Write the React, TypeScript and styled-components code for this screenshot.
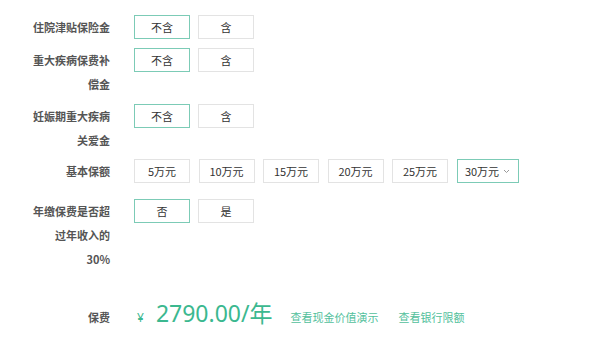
import React from "react";
import styled, { createGlobalStyle } from "styled-components";

const GlobalStyle = createGlobalStyle`
  html, body { margin: 0; padding: 0; background: #fff; }
  body { font-family: "Noto Sans", "Noto Sans CJK SC", sans-serif; }
`;

const Page = styled.div`
  display: flex;
  flex-direction: column;
  padding-top: 15px;
  width: 600px;
  height: 345px;
  box-sizing: border-box;
`;

const Row = styled.div<{ $mb: number }>`
  display: flex;
  align-items: flex-start;
  margin-bottom: ${(p) => p.$mb}px;
`;

const Label = styled.div`
  width: 80px;
  margin-left: 30px;
  margin-right: 24px;
  text-align: right;
  font-family: "Noto Sans CJK SC", sans-serif;
  font-size: 11px;
  font-weight: 600;
  line-height: 24px;
  color: #555;
`;

const Options = styled.div<{ $gap: number }>`
  display: flex;
  gap: ${(p) => p.$gap}px;
`;

const Option = styled.button<{ $active?: boolean; $wide?: boolean }>`
  display: flex;
  align-items: center;
  justify-content: center;
  gap: 4px;
  width: ${(p) => (p.$wide ? 62 : 56)}px;
  height: 24px;
  padding: 0;
  box-sizing: border-box;
  background: #fff;
  border: 1px solid ${(p) => (p.$active ? "#7ccbb6" : "#e3e3e3")};
  font-family: "Noto Sans CJK SC", sans-serif;
  font-size: 11px;
  color: #333;
  cursor: pointer;
`;

const PriceRow = styled.div`
  display: flex;
  align-items: baseline;
`;

const PriceLabel = styled(Label)``;

const Price = styled.div`
  display: flex;
  align-items: baseline;
  padding-left: 3px;
  color: #3bb88f;
  font-family: "Noto Sans", "Noto Sans CJK SC", sans-serif;
`;

const Yen = styled.span`
  font-size: 12px;
  margin-right: 12px;
`;

const Amount = styled.span`
  font-size: 23px;
  line-height: 24px;
  margin-right: 18px;
`;

const Link = styled.a`
  font-family: "Noto Sans CJK SC", sans-serif;
  font-size: 11px;
  color: #52bf9c;
  text-decoration: none;
  margin-right: 20px;
  cursor: pointer;
`;

const Chevron = () => (
  <svg width="7" height="5" viewBox="0 0 7 5">
    <polyline points="1,1 3.5,3.5 6,1" fill="none" stroke="#999" strokeWidth="1" />
  </svg>
);

type RowData = {
  label: string[];
  options: string[];
  active: number;
  mb: number;
  gap: number;
  dropdownLast?: boolean;
};

const rows: RowData[] = [
  { label: ["住院津贴保险金"], options: ["不含", "含"], active: 0, mb: 9, gap: 8 },
  { label: ["重大疾病保费补", "偿金"], options: ["不含", "含"], active: 0, mb: 8, gap: 8 },
  { label: ["妊娠期重大疾病", "关爱金"], options: ["不含", "含"], active: 0, mb: 7, gap: 8 },
  {
    label: ["基本保额"],
    options: ["5万元", "10万元", "15万元", "20万元", "25万元", "30万元"],
    active: 5,
    mb: 16,
    gap: 8.5,
    dropdownLast: true,
  },
  { label: ["年缴保费是否超", "过年收入的", "30%"], options: ["否", "是"], active: 0, mb: 30, gap: 8 },
];

export default function App() {
  return (
    <>
      <GlobalStyle />
      <Page>
        {rows.map((r, i) => (
          <Row key={i} $mb={r.mb}>
            <Label>
              {r.label.map((l, j) => (
                <React.Fragment key={j}>
                  {j > 0 && <br />}
                  {l}
                </React.Fragment>
              ))}
            </Label>
            <Options $gap={r.gap}>
              {r.options.map((o, j) => {
                const isDrop = r.dropdownLast && j === r.options.length - 1;
                return (
                  <Option key={o} $active={j === r.active} $wide={isDrop}>
                    {o}
                    {isDrop && <Chevron />}
                  </Option>
                );
              })}
            </Options>
          </Row>
        ))}
        <PriceRow>
          <PriceLabel>保费</PriceLabel>
          <Price>
            <Yen>¥</Yen>
            <Amount>2790.00/年</Amount>
            <Link>查看现金价值演示</Link>
            <Link>查看银行限额</Link>
          </Price>
        </PriceRow>
      </Page>
    </>
  );
}
